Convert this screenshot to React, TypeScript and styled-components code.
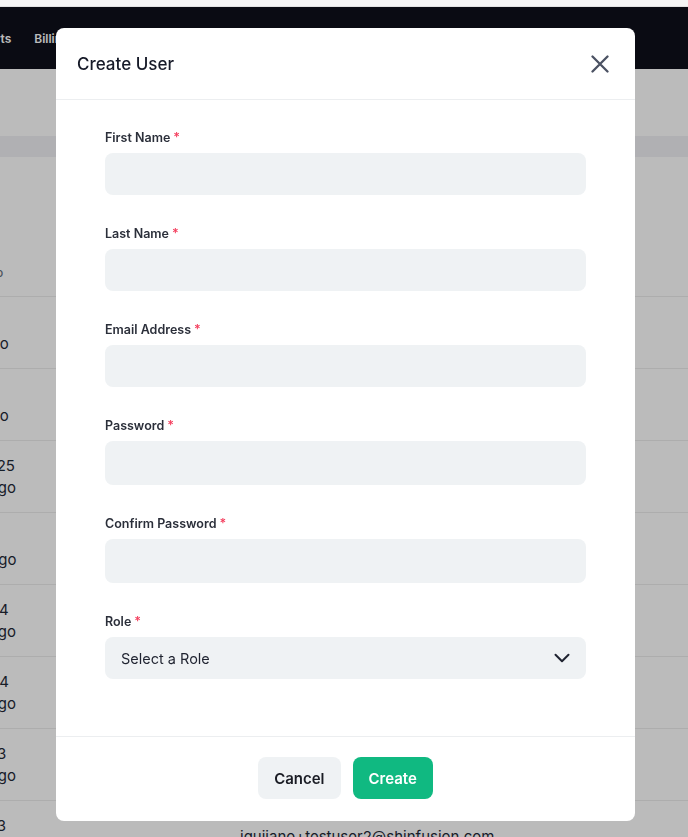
import React from "react";
import styled, { createGlobalStyle } from "styled-components";

const GlobalStyle = createGlobalStyle`
  html, body { margin: 0; padding: 0; overflow: hidden; }
  body { font-family: Inter, "Noto Sans", "Liberation Sans", sans-serif; background: #ffffff; }
  * { box-sizing: border-box; }
`;

const Page = styled.div`
  height: 837px;
  overflow: hidden;
  background: #ffffff;
`;

const TopStrip = styled.div`
  height: 7px;
  background: #f5f5f5;
  border-bottom: 1px solid #e2e2e2;
`;

const Nav = styled.nav`
  height: 62px;
  background: #0e0f1b;
  display: flex;
  align-items: center;
`;

const NavLinks = styled.div`
  display: flex;
  gap: 23px;
  margin-left: -34px;
`;

const NavLink = styled.span`
  color: #ffffff;
  font-size: 12px;
  font-weight: 600;
`;

const HeaderArea = styled.div`
  height: 67px;
`;

const Band = styled.div`
  height: 21px;
  background: #f0f1f4;
`;

const Spacer = styled.div`
  height: 91px;
`;

const Table = styled.div`
  margin-left: -81px;
  display: flex;
  flex-direction: column;
`;

const Row = styled.div<{ $head?: boolean }>`
  display: grid;
  grid-template-columns: 148px 173px 1fr;
  align-items: center;
  height: ${(p) => (p.$head ? "49px" : "72px")};
  border-bottom: 1px solid #ececec;
`;

const HeadCell = styled.div`
  font-size: 12px;
  font-weight: 500;
  color: #6b7280;
  white-space: nowrap;
`;

const DateCell = styled.div`
  display: flex;
  flex-direction: column;
  font-size: 15px;
  line-height: 22px;
  color: #1f2937;
  white-space: nowrap;
`;

const Cell = styled.div`
  font-size: 15px;
  color: #1f2937;
  white-space: nowrap;
`;

const Overlay = styled.div`
  position: fixed;
  top: 7px;
  left: 0;
  right: 0;
  bottom: 0;
  background: rgba(0, 0, 0, 0.267);
  display: flex;
  align-items: flex-start;
  padding: 21px 0 0 56px;
`;

const Modal = styled.div`
  width: 579px;
  height: 793px;
  background: #ffffff;
  border-radius: 8px;
  display: flex;
  flex-direction: column;
  overflow: hidden;
`;

const ModalHeader = styled.div`
  height: 72px;
  flex-shrink: 0;
  display: flex;
  align-items: center;
  justify-content: space-between;
  padding: 0 26px 0 21px;
  border-bottom: 1px solid #eceef0;
`;

const Title = styled.h2`
  margin: 0;
  font-size: 17px;
  font-weight: 500;
  color: #161a28;
`;

const CloseButton = styled.button`
  border: none;
  background: none;
  padding: 0;
  display: flex;
  cursor: pointer;
`;

const Body = styled.div`
  flex: 1;
  padding: 29px 49px 0;
  display: flex;
  flex-direction: column;
  gap: 30px;
`;

const Field = styled.div`
  display: flex;
  flex-direction: column;
  gap: 7px;
`;

const Label = styled.label`
  font-size: 12.5px;
  line-height: 17px;
  font-weight: 600;
  color: #2b2f3a;
`;

const Required = styled.span`
  color: #f43f5e;
  margin-left: 3px;
`;

const Input = styled.input<{ $tall?: boolean }>`
  height: ${(p) => (p.$tall ? "44px" : "42px")};
  border: none;
  border-radius: 8px;
  background: #eff2f4;
  padding: 0 16px;
  font-family: inherit;
  font-size: 15px;
  outline: none;
`;

const Select = styled.div`
  height: 42px;
  border-radius: 8px;
  background: #eff2f4;
  padding: 0 16px;
  display: flex;
  align-items: center;
  justify-content: space-between;
  font-size: 14.5px;
  color: #1f2330;
`;

const Footer = styled.div`
  height: 85px;
  flex-shrink: 0;
  border-top: 1px solid #eceef0;
  display: flex;
  align-items: flex-start;
  justify-content: center;
  gap: 12px;
  padding-top: 20px;
`;

const Button = styled.button<{ $primary?: boolean }>`
  height: 42px;
  padding: 0 16px;
  border: none;
  border-radius: 8px;
  font-family: inherit;
  font-size: 15px;
  font-weight: 600;
  background: ${(p) => (p.$primary ? "#10b981" : "#eff2f4")};
  color: ${(p) => (p.$primary ? "#ffffff" : "#1a1c24")};
  cursor: pointer;
`;

const rows = [
  { d1: "Jul 1, 2025", d2: "2 weeks ago", email: "" },
  { d1: "Jul 2, 2025", d2: "2 weeks ago", email: "" },
  { d1: "Aug 25, 2025", d2: "3 months ago", email: "" },
  { d1: "Jul 9, 2025", d2: "4 months ago", email: "" },
  { d1: "Oct 15, 2024", d2: "9 months ago", email: "" },
  { d1: "Oct 18, 2024", d2: "9 months ago", email: "" },
  { d1: "Nov 8, 2023", d2: "9 months ago", email: "" },
  { d1: "Nov 6, 2023", d2: "9 months ago", email: "iguijano+testuser2@shinfusion.com" },
];

const fields = [
  { label: "First Name", type: "text" },
  { label: "Last Name", type: "text" },
  { label: "Email Address", type: "email" },
  { label: "Password", type: "password", tall: true },
  { label: "Confirm Password", type: "password", tall: true },
];

export default function App() {
  return (
    <>
      <GlobalStyle />
      <Page>
        <TopStrip />
        <Nav>
          <NavLinks>
            <NavLink>Reports</NavLink>
            <NavLink>Billing</NavLink>
          </NavLinks>
        </Nav>
        <HeaderArea />
        <Band />
        <Spacer />
        <Table>
          <Row $head>
            <HeadCell>Last Login Info</HeadCell>
            <HeadCell>Name</HeadCell>
            <HeadCell>Email</HeadCell>
          </Row>
          {rows.map((r, i) => (
            <Row key={i}>
              <DateCell>
                <span>{r.d1}</span>
                <span>{r.d2}</span>
              </DateCell>
              <Cell />
              <Cell>{r.email}</Cell>
            </Row>
          ))}
        </Table>
      </Page>
      <Overlay>
        <Modal>
          <ModalHeader>
            <Title>Create User</Title>
            <CloseButton aria-label="Close">
              <svg width="18" height="18" viewBox="0 0 18 18" fill="none">
                <path d="M1.5 1.5L16.5 16.5M16.5 1.5L1.5 16.5" stroke="#4b5263" strokeWidth="2.3" strokeLinecap="round" />
              </svg>
            </CloseButton>
          </ModalHeader>
          <Body>
            {fields.map((f) => (
              <Field key={f.label}>
                <Label>
                  {f.label}
                  <Required>*</Required>
                </Label>
                <Input type={f.type} $tall={f.tall} />
              </Field>
            ))}
            <Field>
              <Label>
                Role
                <Required>*</Required>
              </Label>
              <Select>
                <span>Select a Role</span>
                <svg width="16" height="10" viewBox="0 0 16 10" fill="none">
                  <path d="M1.5 1.8L8 8.2L14.5 1.8" stroke="#1f2330" strokeWidth="2" strokeLinecap="round" strokeLinejoin="round" />
                </svg>
              </Select>
            </Field>
          </Body>
          <Footer>
            <Button>Cancel</Button>
            <Button $primary>Create</Button>
          </Footer>
        </Modal>
      </Overlay>
    </>
  );
}
